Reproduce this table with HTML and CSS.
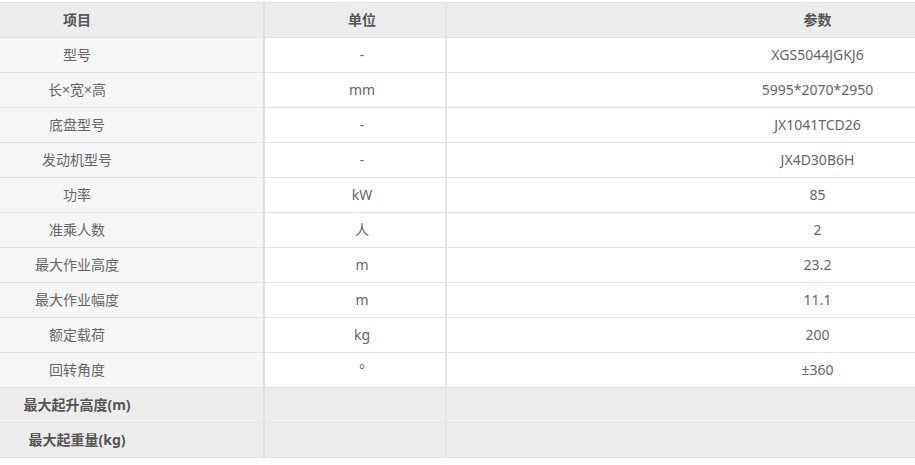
FILE: index.html
```html
<!DOCTYPE html>
<html lang="zh-CN">
<head>
<meta charset="utf-8">
<title>参数表</title>
<link rel="stylesheet" href="styles.css">
</head>
<body>
<table class="spec">
  <thead>
    <tr><th class="c1">项目</th><th class="c2">单位</th><th class="c3">参数</th></tr>
  </thead>
  <tbody>
    <tr><td class="c1">型号</td><td class="c2">-</td><td class="c3">XGS5044JGKJ6</td></tr>
    <tr><td class="c1">长×宽×高</td><td class="c2">mm</td><td class="c3">5995*2070*2950</td></tr>
    <tr><td class="c1">底盘型号</td><td class="c2">-</td><td class="c3">JX1041TCD26</td></tr>
    <tr><td class="c1">发动机型号</td><td class="c2">-</td><td class="c3">JX4D30B6H</td></tr>
    <tr><td class="c1">功率</td><td class="c2">kW</td><td class="c3">85</td></tr>
    <tr><td class="c1">准乘人数</td><td class="c2">人</td><td class="c3">2</td></tr>
    <tr><td class="c1">最大作业高度</td><td class="c2">m</td><td class="c3">23.2</td></tr>
    <tr><td class="c1">最大作业幅度</td><td class="c2">m</td><td class="c3">11.1</td></tr>
    <tr><td class="c1">额定载荷</td><td class="c2">kg</td><td class="c3">200</td></tr>
    <tr><td class="c1">回转角度</td><td class="c2">°</td><td class="c3">±360</td></tr>
    <tr class="group"><td class="c1">最大起升高度(m)</td><td class="c2"></td><td class="c3"></td></tr>
    <tr class="group"><td class="c1">最大起重量(kg)</td><td class="c2"></td><td class="c3"></td></tr>
  </tbody>
</table>
</body>
</html>
```
FILE: styles.css
```css
html, body {
  margin: 0;
  padding: 0;
  background: #fff;
  overflow: hidden;
}
.spec {
  margin-top: 2px;
  width: 915px;
  border-collapse: collapse;
  table-layout: fixed;
  font-family: "Noto Sans", "Noto Sans CJK SC", sans-serif;
  font-size: 14px;
  color: #666;
}
.spec th, .spec td {
  height: 32px;
  padding: 0 0 2px;
  text-align: center;
  border-top: 1px solid #e3e3e3;
  border-bottom: 1px solid #e3e3e3;
  white-space: nowrap;
}
.spec th {
  background: #ececec;
  font-weight: 600;
  color: #555;
}
.spec .c1 {
  width: 154px;
  padding-right: 109px;
  border-right: 2px solid #e0e0e0;
}
.spec td.c1 {
  background: #f6f6f6;
}
.spec .c2 {
  width: 166px;
  padding-left: 14px;
  border-right: 2px solid #e6e6e6;
}
.spec .c3 {
  padding-left: 273px;
}
.spec .group td {
  background: #ececec;
  font-weight: 700;
  color: #555;
}
```
